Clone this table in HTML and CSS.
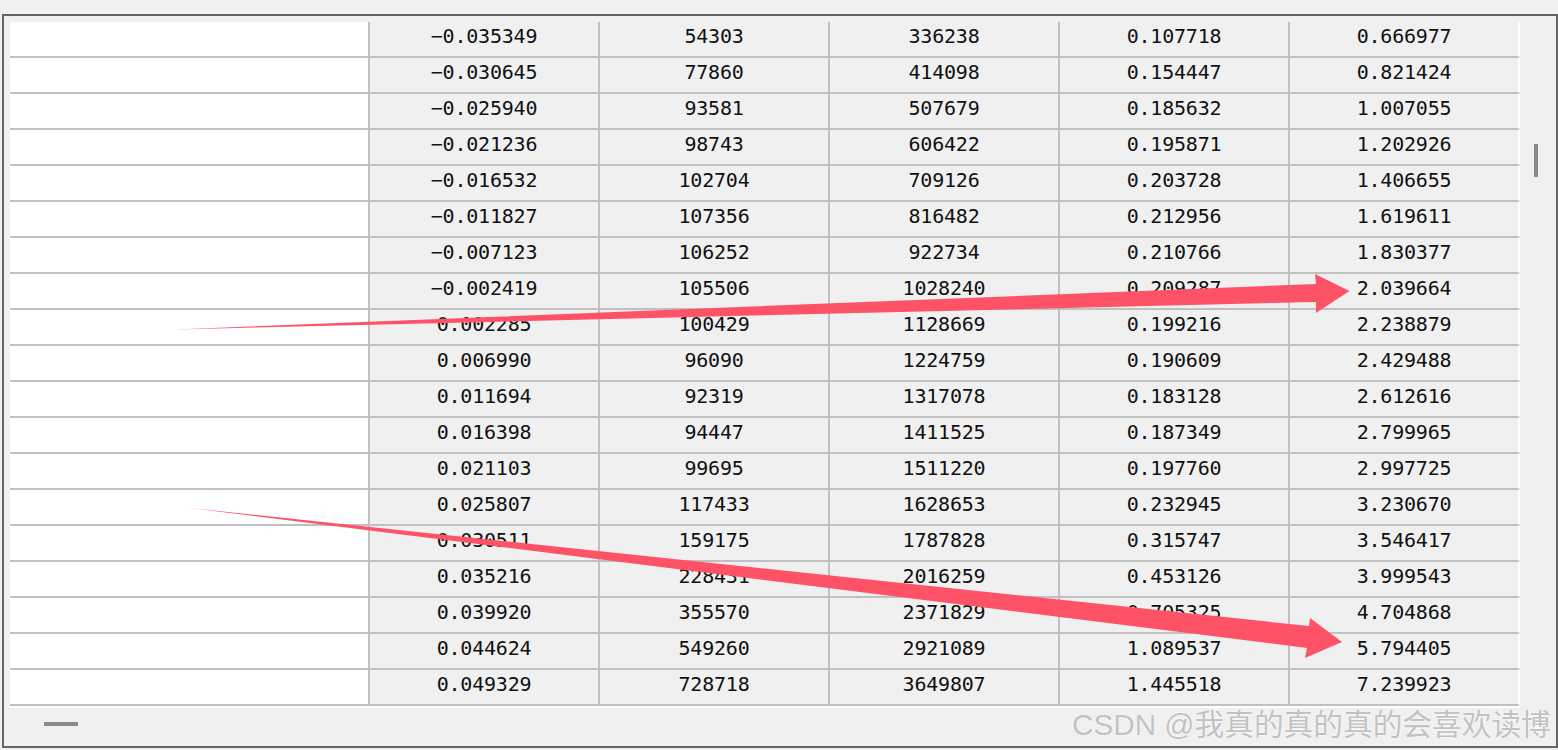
FILE: index.html
```html
<!DOCTYPE html>
<html>
<head>
<meta charset="utf-8">
<link rel="stylesheet" href="styles.css">
</head>
<body>
<div class="frame">
  <div class="viewport">
    <div class="row"><div class="c first"></div><div class="c">−0.035349</div><div class="c">54303</div><div class="c">336238</div><div class="c">0.107718</div><div class="c last">0.666977</div></div>
    <div class="row"><div class="c first"></div><div class="c">−0.030645</div><div class="c">77860</div><div class="c">414098</div><div class="c">0.154447</div><div class="c last">0.821424</div></div>
    <div class="row"><div class="c first"></div><div class="c">−0.025940</div><div class="c">93581</div><div class="c">507679</div><div class="c">0.185632</div><div class="c last">1.007055</div></div>
    <div class="row"><div class="c first"></div><div class="c">−0.021236</div><div class="c">98743</div><div class="c">606422</div><div class="c">0.195871</div><div class="c last">1.202926</div></div>
    <div class="row"><div class="c first"></div><div class="c">−0.016532</div><div class="c">102704</div><div class="c">709126</div><div class="c">0.203728</div><div class="c last">1.406655</div></div>
    <div class="row"><div class="c first"></div><div class="c">−0.011827</div><div class="c">107356</div><div class="c">816482</div><div class="c">0.212956</div><div class="c last">1.619611</div></div>
    <div class="row"><div class="c first"></div><div class="c">−0.007123</div><div class="c">106252</div><div class="c">922734</div><div class="c">0.210766</div><div class="c last">1.830377</div></div>
    <div class="row"><div class="c first"></div><div class="c">−0.002419</div><div class="c">105506</div><div class="c">1028240</div><div class="c">0.209287</div><div class="c last">2.039664</div></div>
    <div class="row"><div class="c first"></div><div class="c">0.002285</div><div class="c">100429</div><div class="c">1128669</div><div class="c">0.199216</div><div class="c last">2.238879</div></div>
    <div class="row"><div class="c first"></div><div class="c">0.006990</div><div class="c">96090</div><div class="c">1224759</div><div class="c">0.190609</div><div class="c last">2.429488</div></div>
    <div class="row"><div class="c first"></div><div class="c">0.011694</div><div class="c">92319</div><div class="c">1317078</div><div class="c">0.183128</div><div class="c last">2.612616</div></div>
    <div class="row"><div class="c first"></div><div class="c">0.016398</div><div class="c">94447</div><div class="c">1411525</div><div class="c">0.187349</div><div class="c last">2.799965</div></div>
    <div class="row"><div class="c first"></div><div class="c">0.021103</div><div class="c">99695</div><div class="c">1511220</div><div class="c">0.197760</div><div class="c last">2.997725</div></div>
    <div class="row"><div class="c first"></div><div class="c">0.025807</div><div class="c">117433</div><div class="c">1628653</div><div class="c">0.232945</div><div class="c last">3.230670</div></div>
    <div class="row"><div class="c first"></div><div class="c">0.030511</div><div class="c">159175</div><div class="c">1787828</div><div class="c">0.315747</div><div class="c last">3.546417</div></div>
    <div class="row"><div class="c first"></div><div class="c">0.035216</div><div class="c">228431</div><div class="c">2016259</div><div class="c">0.453126</div><div class="c last">3.999543</div></div>
    <div class="row"><div class="c first"></div><div class="c">0.039920</div><div class="c">355570</div><div class="c">2371829</div><div class="c">0.705325</div><div class="c last">4.704868</div></div>
    <div class="row"><div class="c first"></div><div class="c">0.044624</div><div class="c">549260</div><div class="c">2921089</div><div class="c">1.089537</div><div class="c last">5.794405</div></div>
    <div class="row"><div class="c first"></div><div class="c">0.049329</div><div class="c">728718</div><div class="c">3649807</div><div class="c">1.445518</div><div class="c last">7.239923</div></div>
  </div>
  <div class="vscroll"><div class="vthumb"></div></div>
  <div class="hscroll"><div class="hthumb"></div></div>
</div>
<svg class="arrows" width="1558" height="750" viewBox="0 0 1558 750">
  <polygon points="175,329.5 1316,284 1315,274 1349.5,291 1316,313 1316,302" fill="#fe5367"/>
  <polygon points="190,508 1309,626 1310,618 1342,642 1305,658 1307,648" fill="#fe5367"/>
</svg>
<div class="watermark">CSDN @我真的真的真的会喜欢读博</div>
</body>
</html>
```
FILE: styles.css
```css
html, body {
  margin: 0;
  padding: 0;
}
body {
  background: #f0f0f0;
  width: 1558px;
  height: 750px;
  overflow: hidden;
  position: relative;
  font-family: "DejaVu Sans Mono", "Liberation Mono", monospace;
}
.frame {
  box-sizing: border-box;
  margin: 14px 0 0 2px;
  width: 1556px;
  height: 734px;
  border: 2px solid #646464;
  padding: 6px 0 0 6px;
  display: grid;
  grid-template-columns: 1510px 1fr;
  grid-template-rows: 686px 1fr;
}
.viewport {
  background: #ffffff;
  overflow: hidden;
}
.row {
  display: grid;
  grid-template-columns: 360px repeat(5, 230px);
  height: 36px;
}
.c {
  box-sizing: border-box;
  height: 36px;
  background: #f0f0f0;
  border-right: 2px solid #c0c0c0;
  border-bottom: 2px solid #c0c0c0;
  text-align: center;
  font-size: 20px;
  line-height: 29px;
  letter-spacing: -0.2px;
  color: #111;
}
.c.first {
  background: #ffffff;
}
.c.last {
  border-right-color: #ffffff;
}
.vscroll {
  padding: 122px 0 0 14px;
}
.vthumb {
  width: 4px;
  height: 33px;
  background: #8a8a8a;
}
.hscroll {
  grid-column: 1 / span 2;
  padding: 14px 0 0 34px;
}
.hthumb {
  width: 34px;
  height: 4px;
  background: #8a8a8a;
}
.arrows {
  position: absolute;
  left: 0;
  top: 0;
  pointer-events: none;
}
.watermark {
  position: absolute;
  left: 1072px;
  top: 707px;
  font-family: "Liberation Sans", "Noto Sans CJK SC", sans-serif;
  font-size: 29.7px;
  line-height: 36px;
  color: #c2c2c2;
  text-shadow: 0 0 2px #ffffff, 0 0 1px #ffffff;
  white-space: nowrap;
}
```
